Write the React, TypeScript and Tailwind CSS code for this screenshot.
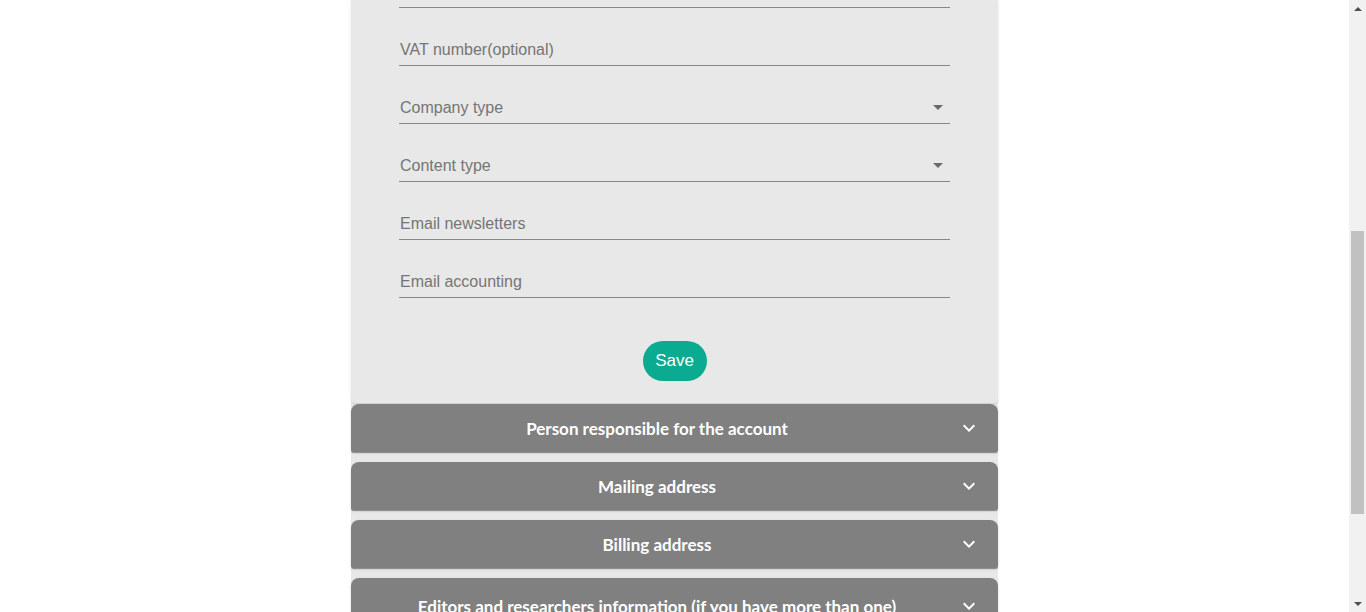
import React from "react";

const fields = [
  { label: "VAT number(optional)", select: false },
  { label: "Company type", select: true },
  { label: "Content type", select: true },
  { label: "Email newsletters", select: false },
  { label: "Email accounting", select: false },
];

function ExpandMore() {
  return (
    <svg width="24" height="24" viewBox="0 0 24 24" className="fill-white shrink-0">
      <path d="M16.59 8.59 12 13.17 7.41 8.59 6 10l6 6 6-6z" />
    </svg>
  );
}

function Header({ title, tall }: { title: string; tall?: boolean }) {
  return (
    <div
      className={`flex items-center rounded-t-[8px] rounded-b-[2px] bg-[#808080] pl-4 pr-[17px] shadow-[0_2px_1px_-1px_rgba(0,0,0,0.25),0_1px_1px_0_rgba(0,0,0,0.14),0_1px_3px_0_rgba(0,0,0,0.12)] ${
        tall ? "h-[56px] pt-[2px]" : "h-[48px] pt-[2px]"
      }`}
    >
      <div className="flex-1 text-center text-[17px] font-bold leading-[20px] text-white" style={{ fontFamily: "Lato, sans-serif" }}>
        {title}
      </div>
      <div className="ml-[10px] mt-[-2px]">
        <ExpandMore />
      </div>
    </div>
  );
}

export default function App() {
  return (
    <div className="relative flex h-[612px] w-[1366px] overflow-hidden bg-white" style={{ fontFamily: '"Liberation Sans", Arial, sans-serif' }}>
      <div className="flex-1 overflow-hidden">
        <div className="mx-auto w-[647px] bg-[#e8e8e8]">
          <div className="rounded-b-[4px] bg-[#e8e8e8] px-12 pb-[22px] shadow-[0_1px_3px_0_rgba(0,0,0,0.12)]">
            <div className="h-[8px] border-b border-[#878787]" />
            {fields.map((f) => (
              <div key={f.label} className="flex h-[58px] items-end border-b border-[#878787] pb-[6px] pl-px">
                <span className="flex-1 text-[16px] leading-[19px] text-[#757575]">{f.label}</span>
                {f.select && (
                  <svg width="24" height="24" viewBox="0 0 24 24" className="mr-0 mb-[-2px] fill-[#6a6a6a]">
                    <path d="M7 10l5 5 5-5z" />
                  </svg>
                )}
              </div>
            ))}
            <div className="mt-[43px] flex justify-center">
              <button className="h-[40px] w-[64px] rounded-full bg-[#0bab91] text-[17px] text-white">Save</button>
            </div>
          </div>
          <div className="flex flex-col gap-[10px] pt-px">
            <Header title="Person responsible for the account" />
            <Header title="Mailing address" />
            <Header title="Billing address" />
            <Header title="Editors and researchers information (if you have more than one)" tall />
          </div>
        </div>
      </div>
      <div className="flex h-full w-[17px] flex-col bg-[#f1f1f1]">
        <div className="flex h-[17px] items-center justify-center">
          <div className="h-0 w-0 border-x-[4px] border-b-[4px] border-x-transparent border-b-[#505050]" />
        </div>
        <div className="flex-1 px-[2px] pt-[214px]">
          <div className="h-[283px] bg-[#c1c1c1]" />
        </div>
        <div className="flex h-[17px] items-center justify-center">
          <div className="h-0 w-0 border-x-[4px] border-t-[4px] border-x-transparent border-t-[#505050]" />
        </div>
      </div>
    </div>
  );
}
